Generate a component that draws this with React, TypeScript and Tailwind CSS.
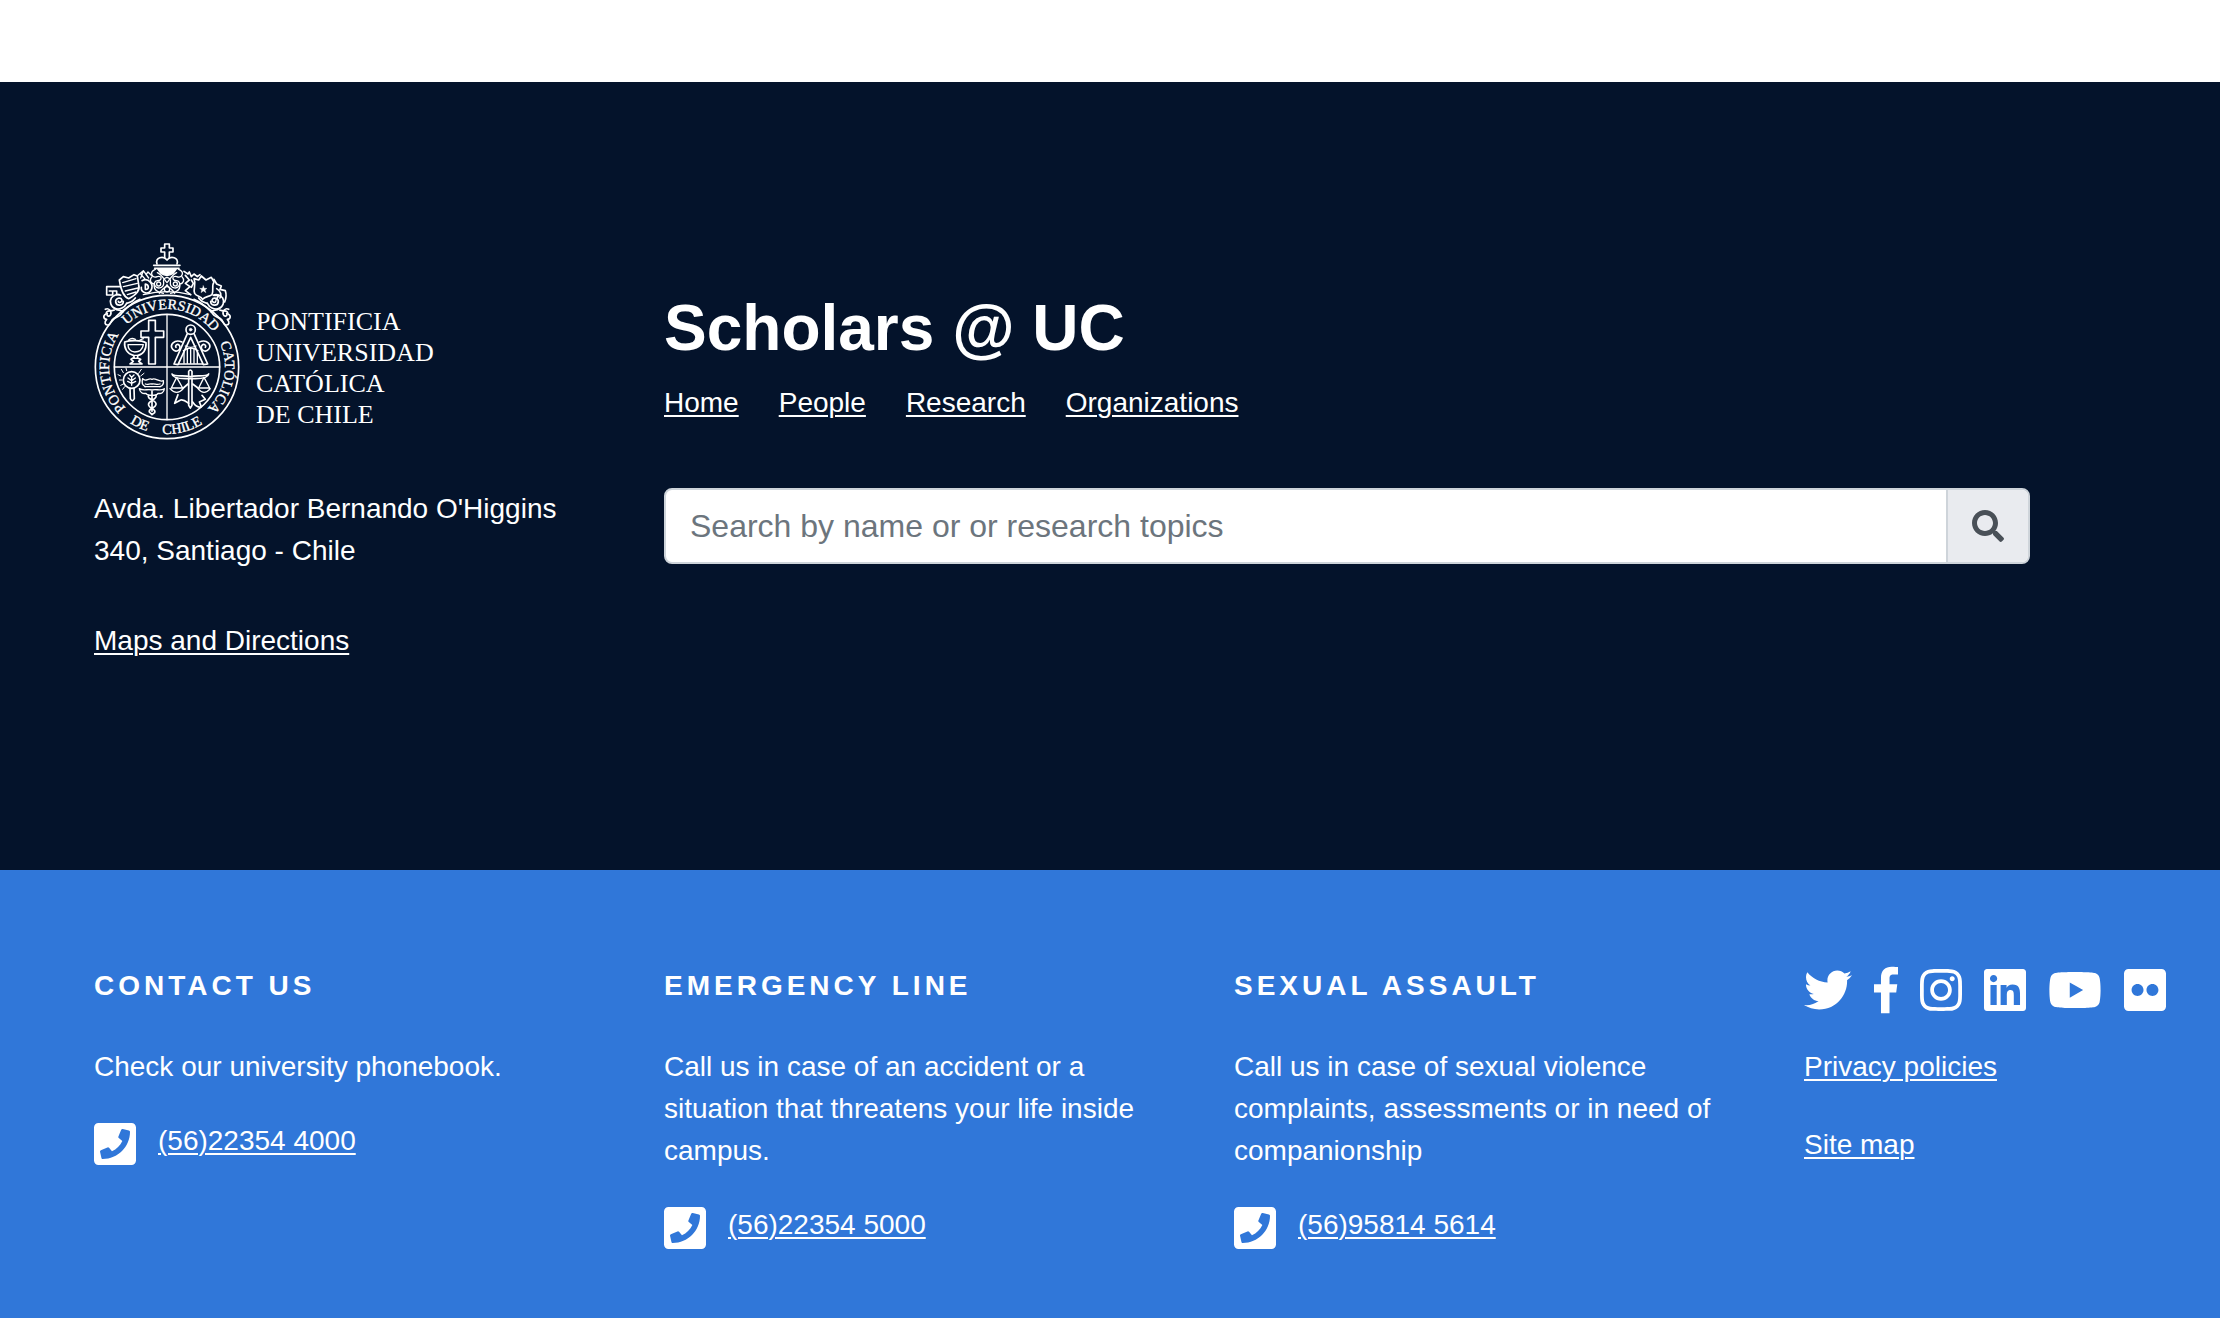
import type { ReactNode } from 'react';
import {
  FaFlickr,
  FaInstagram,
  FaLinkedin,
  FaPhoneSquare,
  FaSearch,
  FaTwitter,
  FaYoutube,
} from 'react-icons/fa';

const linkClass = 'underline decoration-2 underline-offset-[3px]';

function Curl() {
  return (
    <g>
      {/* lower scrollwork */}
      <path d="M103 240 C88 246 80 238 78 252 C68 256 70 268 80 268 C72 276 74 286 84 285 C94 284 92 270 100 266 C110 260 120 262 128 246" />
      <path d="M76 238 C86 232 96 244 92 254 C88 262 78 258 82 250" />
      <path d="M128 246 C122 236 112 244 106 236 C92 232 88 214 94 204 C100 196 112 190 122 196" />
      <path d="M106 236 C120 240 134 232 140 220 M130 214 C130 228 110 230 107 216 C106 204 122 200 126 210 C126 218 116 220 115 214" />
      <path d="M128 246 C146 228 160 216 180 208 M140 220 C150 218 160 212 166 204" />
    </g>
  );
}

function Seal() {
  return (
    <svg
      viewBox="42 39 438 591"
      className="h-[197px] w-[146px] shrink-0"
      fill="none"
      stroke="#fff"
      strokeWidth="5"
      strokeLinejoin="round"
      strokeLinecap="round"
      aria-hidden="true"
    >
      <defs>
        <path id="ring-up" d="M261 585 A174 174 0 0 1 261 237 A174 174 0 0 1 261 585" />
        <path id="ring-down" d="M60 411 A201 201 0 0 0 462 411" />
      </defs>
      <circle cx="261" cy="411" r="215" />
      <circle cx="261" cy="411" r="158" />
      <path d="M261 253 V569 M103 411 H419" strokeWidth="4" />

      <g
        fill="#fff"
        strokeWidth="1"
        fontFamily="'Liberation Serif', serif"
        fontSize="43"
        textAnchor="middle"
      >
        <text>
          <textPath href="#ring-up" startOffset="257">PONTIFICIA</textPath>
        </text>
        <text>
          <textPath href="#ring-up" startOffset="560">UNIVERSIDAD</textPath>
        </text>
        <text>
          <textPath href="#ring-up" startOffset="852">CATÓLICA</textPath>
        </text>
        <text>
          <textPath href="#ring-down" startOffset="226">DE</textPath>
        </text>
        <text>
          <textPath href="#ring-down" startOffset="365">CHILE</textPath>
        </text>
      </g>

      {/* orb and cross */}
      <path d="M254 84 V66 H243 V54 H254 V42 H268 V54 H279 V66 H268 V84" />
      <path d="M231 102 C224 82 250 76 261 90 C272 76 298 82 291 102" />
      <path d="M221 106 H300 M224 115 H297" />
      <path d="M234 118 H288 L279 130 Q261 142 243 130 Z" fill="#fff" />

      {/* interlaced ribbons */}
      <g strokeWidth="4">
        <path d="M226 118 C206 126 216 146 232 140 C248 136 246 152 232 152 C214 156 226 180 244 172 C262 162 238 148 261 142 C284 148 260 162 278 172 C296 180 308 156 290 152 C276 152 274 136 290 140 C306 146 316 126 296 118" />
        <path d="M232 128 C246 134 252 148 261 158 C270 148 276 134 290 128 M238 190 C244 176 256 176 261 164 C266 176 278 176 284 190" />
        <path d="M222 166 C222 182 236 188 250 190 M300 166 C300 182 286 188 272 190 M216 140 C206 150 212 160 222 162 M306 140 C316 150 310 160 300 162" />
        <circle cx="261" cy="178" r="8" />
        <circle cx="236" cy="162" r="6" />
        <circle cx="286" cy="162" r="6" />
        <path d="M190 194 Q261 176 332 194" />
      </g>

      {/* keys */}
      <path d="M80 170 H122 M80 170 V195 H98 V183 H110 M88 183 H94 M110 183 V194 H118" />
      <path d="M174 136 L190 122 L206 144 M182 132 L194 146 M190 122 L182 144 M198 134 L204 126 L214 136" strokeWidth="4" />
      <path d="M186 152 C206 142 224 164 212 182 C202 196 182 186 184 172 M196 162 C208 164 208 180 196 178 Z" />

      {/* left shield */}
      <path d="M118 150 L130 140 L146 144 L162 134 L172 138 L176 164 C182 184 166 196 146 206 C128 200 122 176 118 150 Z" />
      <path d="M128 158 L168 146 M130 170 L172 160 M136 183 L174 174 M142 194 L168 186" strokeWidth="4" />

      {/* right shield */}
      <path d="M342 146 L356 150 L364 138 L378 150 L394 142 L402 156 C394 166 402 182 396 194 C384 202 376 198 368 208 C362 198 350 200 344 190 C338 176 350 164 342 146 Z" />
      <path d="M370 167 L373 175 L381 175 L375 180 L378 188 L370 183 L363 188 L365 180 L359 175 L367 175 Z" fill="#fff" strokeWidth="1" />
      <path d="M312 124 L324 132 L328 126 L334 140 L342 132 L352 140 L360 134 M316 136 L328 150 L316 160 L330 170 L316 182 L332 194 M334 150 L340 160 L334 172" />
      <path d="M402 148 L410 162 L424 168 L420 178 L436 182 C440 194 438 206 434 216 M410 176 C422 184 426 192 420 204 M402 196 L416 196 L408 210" />

      <Curl />
      <g transform="translate(522 0) scale(-1 1)">
        <Curl />
      </g>

      {/* cross and chalice */}
      <path d="M206 271 H226 V303 H251 V322 H226 V402 H206 V322 H183 V303 H206 Z" />
      <path d="M134 336 C150 330 184 330 198 338 C200 360 188 374 174 376 L172 384 L182 388 L176 394 L186 402 H150 L160 394 L153 388 L163 382 L160 376 C142 372 132 356 134 336 Z" />
      <path d="M144 344 H190 M144 344 C144 356 152 364 164 366 C180 366 188 356 190 344 M160 376 H174 M160 385 H176" strokeWidth="4" />
      <path d="M166 328 C158 324 150 326 146 330 M180 330 L190 326" strokeWidth="4" />

      {/* compass over capital */}
      <circle cx="332" cy="299" r="14" />
      <circle cx="332" cy="299" r="4" fill="#fff" strokeWidth="2" />
      <path d="M322 311 L282 402 L294 404 L332 322 L370 404 L383 402 L342 311" />
      <path d="M296 402 H368" strokeWidth="4" />
      <path d="M312 362 V400 M322 356 V400 M332 354 V400 M342 356 V400 M352 362 V400" strokeWidth="4" />
      <path d="M316 348 Q332 356 348 348 M310 362 Q332 346 354 362" strokeWidth="4" />
      <path d="M306 336 C282 326 268 346 278 358 C288 370 306 358 298 346 C292 340 284 346 288 352 M358 336 C382 326 396 346 386 358 C376 370 358 358 366 346 C372 340 380 346 376 352" />

      {/* magnifier and staff */}
      <circle cx="155" cy="450" r="25" />
      <path d="M150 476 L151 506 Q157 518 163 506 L162 476" />
      <path d="M155 466 V442 M155 452 L144 444 M155 452 L166 444 M155 460 L143 454 M155 460 L167 454 M155 442 L149 435 M155 442 L162 435" strokeWidth="4" />
      <path d="M122 438 L114 434 M130 428 L124 418 M140 422 L138 414 M176 430 L184 418 M182 438 L192 430 M126 450 L118 450 M130 462 L122 466 M134 470 L128 478" strokeWidth="3" />
      <path d="M188 446 C196 458 206 442 216 448 C226 442 238 458 250 452 C252 462 246 468 240 470 M188 446 C184 458 188 466 196 470" strokeWidth="4" />
      <path d="M196 462 C204 466 208 460 216 462 C224 460 230 466 240 462" strokeWidth="4" />
      <path d="M178 476 C190 484 204 476 216 480 C228 476 242 484 253 476 C252 488 244 492 234 490 C230 498 202 498 198 490 C188 492 180 488 178 476 Z" strokeWidth="4" />
      <path d="M194 470 H240" strokeWidth="4" />
      <path d="M206 496 C198 508 232 510 228 524 C226 536 204 534 208 546 L216 554 M228 496 C234 508 200 512 206 526 C208 536 230 536 224 548 L216 554 M216 484 V544" />

      {/* sword, scales and book */}
      <path d="M326 436 L326 424 Q331 416 336 424 L336 436 M326 444 V526 L331 534 L336 526 V444" />
      <path d="M276 432 C284 442 316 434 331 440 C346 434 378 442 386 432 C384 446 360 446 346 446 H316 C302 446 278 446 276 432 Z" />
      <path d="M290 442 L274 474 H308 Z M372 442 L356 474 H389 Z M270 476 Q290 498 310 476 M354 476 Q372 498 391 476" strokeWidth="4" />
      <path d="M294 494 L284 520 L302 510 C312 508 318 514 326 520 M338 516 C346 528 354 534 364 530 L358 516 L376 508 L366 496 M310 474 L324 462 M338 462 L354 474" />
    </svg>
  );
}

function FacebookGlyph() {
  return (
    <svg viewBox="0 0 264 512" className="h-12 w-6" fill="currentColor" aria-hidden="true">
      <path d="M76.7 512V283H0v-91h76.7v-71.7C76.7 42.4 124.3 0 193.8 0c33.3 0 61.9 2.5 70.2 3.6V85h-48.2c-37.8 0-45.1 18-45.1 44.3V192H256l-11.7 91h-73.6v229" />
    </svg>
  );
}

const navLinks = ['Home', 'People', 'Research', 'Organizations'];

const contacts = [
  { title: 'CONTACT US', text: 'Check our university phonebook.', phone: '(56)22354 4000' },
  {
    title: 'EMERGENCY LINE',
    text: 'Call us in case of an accident or a situation that threatens your life inside campus.',
    phone: '(56)22354 5000',
  },
  {
    title: 'SEXUAL ASSAULT',
    text: 'Call us in case of sexual violence complaints, assessments or in need of companionship',
    phone: '(56)95814 5614',
  },
];

const socials: { name: string; icon: ReactNode }[] = [
  { name: 'Twitter', icon: <FaTwitter className="size-12" /> },
  { name: 'Facebook', icon: <FacebookGlyph /> },
  { name: 'Instagram', icon: <FaInstagram className="h-12 w-[42px]" /> },
  { name: 'LinkedIn', icon: <FaLinkedin className="h-12 w-[42px]" /> },
  { name: 'YouTube', icon: <FaYoutube className="h-12 w-[54px]" /> },
  { name: 'Flickr', icon: <FaFlickr className="h-12 w-[42px]" /> },
];

const gridClass =
  'grid grid-cols-[minmax(0,510fr)_minmax(0,510fr)_minmax(0,510fr)_minmax(0,364fr)] gap-x-[60px] pl-[94px] pr-[52px]';

export default function App() {
  return (
    <footer className="flex min-h-screen flex-col bg-white pt-[82px] font-['Liberation_Sans',Arial,sans-serif] text-[28px] leading-[42px] text-white">
      <section className={`${gridClass} bg-[#04132b] pb-52 pt-[161px]`}>
        <div>
          <div className="flex items-start gap-4">
            <Seal />
            <p className="pt-[63px] font-['Liberation_Serif',serif] text-[26px] leading-[31px]">
              PONTIFICIA
              <br />
              UNIVERSIDAD
              <br />
              CATÓLICA
              <br />
              DE CHILE
            </p>
          </div>
          <address className="mt-12 not-italic">
            Avda. Libertador Bernando O'Higgins 340, Santiago - Chile
          </address>
          <a href="#maps" className={`mt-12 inline-block ${linkClass}`}>
            Maps and Directions
          </a>
        </div>

        <div className="col-span-3 pt-[47px]">
          <h1 className="text-[64px] font-bold leading-[76px]">Scholars @ UC</h1>
          <nav className="mt-4 flex gap-10">
            {navLinks.map((label) => (
              <a key={label} href={`#${label.toLowerCase()}`} className={linkClass}>
                {label}
              </a>
            ))}
          </nav>
          <form
            role="search"
            onSubmit={(e) => e.preventDefault()}
            className="mt-16 flex h-[76px] max-w-[1366px] overflow-hidden rounded-lg border-2 border-[#ced4da] bg-white"
          >
            <input
              type="text"
              aria-label="Search by name or or research topics"
              placeholder="Search by name or or research topics"
              className="min-w-0 flex-1 px-6 text-[32px] text-[#495057] outline-none placeholder:text-[#6c757d]"
            />
            <button
              type="submit"
              aria-label="Search"
              className="flex w-[82px] items-center justify-center border-l-2 border-[#ced4da] bg-[#e9ebef] text-[#495057]"
            >
              <FaSearch className="size-8" />
            </button>
          </form>
        </div>
      </section>

      <section className={`${gridClass} flex-1 bg-[#3077d9] pt-24`}>
        {contacts.map(({ title, text, phone }) => (
          <div key={title}>
            <h2 className="font-bold leading-10 tracking-[4px]">{title}</h2>
            <p className="mt-10">{text}</p>
            <div className="mt-8 flex items-start gap-[22px]">
              <FaPhoneSquare className="h-12 w-[42px]" aria-hidden="true" />
              <a href={`tel:${phone}`} className={linkClass}>
                {phone}
              </a>
            </div>
          </div>
        ))}
        <div>
          <div className="flex gap-[22px]">
            {socials.map(({ name, icon }) => (
              <a key={name} href={`#${name.toLowerCase()}`} aria-label={name}>
                {icon}
              </a>
            ))}
          </div>
          <div className="mt-8 flex flex-col items-start gap-9">
            <a href="#privacy" className={linkClass}>
              Privacy policies
            </a>
            <a href="#sitemap" className={linkClass}>
              Site map
            </a>
          </div>
        </div>
      </section>
    </footer>
  );
}
